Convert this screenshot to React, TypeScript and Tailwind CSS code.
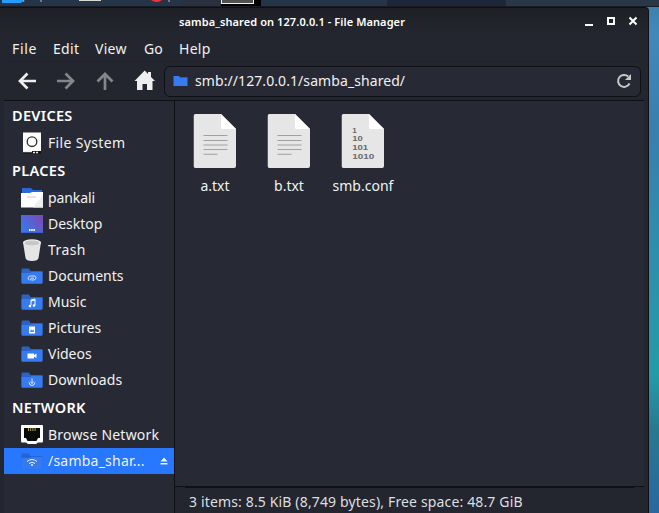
import type { ReactNode } from "react";

function Folder({ children, muted = false }: { children?: ReactNode; muted?: boolean }) {
  return (
    <svg width="22" height="20" viewBox="0 0 22 20" className="block">
      <path d="M.5 3.500V16h21V5H9.500L8 2.500H1.500Z" fill={muted ? "#2864cf" : "#2b62c4"} />
      <path d="M.5 7H9l1.500-1h11v11q0 .8-.8.8H1.300q-.8 0-.8-.8Z" fill={muted ? "#367bee" : "#367bf0"} />
      {children}
    </svg>
  );
}

function Row({ icon, label, track = "", active = false }: { icon: ReactNode; label: string; track?: string; active?: boolean }) {
  return (
    <div className={`flex h-[26px] shrink-0 items-center pl-[17px] pr-[6px] ${active ? "bg-[#2777ff]" : ""}`}>
      <span className="w-[22px] shrink-0">{icon}</span>
      <span className={`ml-[5px] whitespace-nowrap leading-[26px] ${track}`}>{label}</span>
      {active && (
        <svg width="8" height="8" viewBox="0 0 8 8" className="ml-auto" fill="#eef2fb">
          <path d="M4 .5 7.500 4.500H.5ZM.5 6h7v1.500h-7Z" />
        </svg>
      )}
    </div>
  );
}

function Heading({ children }: { children: ReactNode }) {
  return <div className="h-[29px] shrink-0 pl-2 text-[14.5px] font-semibold leading-[29px] tracking-[.3px] text-white">{children}</div>;
}

function FileIcon({ binary = false }: { binary?: boolean }) {
  return (
    <svg width="43" height="54" viewBox="0 0 43 54" className="block -translate-x-[.5px]">
      <path d="M2 0H27.500L42.500 15V52q0 2-2 2H2q-2 0-2-2V2Q0 0 2 0Z" fill="#e6e6e6" />
      <path d="M27.500 0 42.500 15H29q-1.500 0-1.500-1.500Z" fill="#fff" />
      {binary ? (
        <g fill="#686868" fontFamily="Liberation Sans" fontWeight="bold" fontSize="8">
          <text x="10.7" y="18.5">1</text>
          <text x="10.7" y="27.2" textLength="10.5" lengthAdjust="spacingAndGlyphs">10</text>
          <text x="10.7" y="35.9" textLength="16" lengthAdjust="spacingAndGlyphs">101</text>
          <text x="10.7" y="44.6" textLength="22" lengthAdjust="spacingAndGlyphs">1010</text>
        </g>
      ) : (
        <path d="M10 21.500H34M10 26.500H34M10 31H34M10 35.500H34M10 40.300H24" stroke="#a0a0a0" strokeWidth="1.1" />
      )}
    </svg>
  );
}

function FileItem({ name, binary = false }: { name: string; binary?: boolean }) {
  return (
    <div className="flex w-[74px] flex-col items-center">
      <FileIcon binary={binary} />
      <span className="mt-[6px] leading-6">{name}</span>
    </div>
  );
}

function TopPanel() {
  return (
    <svg width="659" height="7" viewBox="0 0 659 7" className="block shrink-0">
      <rect width="659" height="7" fill="#263448" />
      <rect x="181" width="41" height="7" fill="#2c3140" />
      <rect x="387" width="119" height="7" fill="#1d2739" />
      <rect x="506" width="153" height="7" fill="#293746" />
      <path d="M2 0H24L21 3H2Z" fill="#259cff" />
      <path d="M23.500 0V2M41 0V2M169 0V2" stroke="#8b929d" strokeWidth="1.5" />
      <rect x="79" width="22" height="1" fill="#d8d8d4" />
      <path d="M151 0H162Q157 4 151 0Z" fill="#fa3038" />
      <rect x="221" width="40" height="6" fill="#000" />
      <path d="M221 0H254V4H221Z" fill="#f1f1f1" />
      <path d="M222 0H253V3H222Z" fill="#51504f" />
      <rect y="6" width="659" height="1" fill="#171b23" />
    </svg>
  );
}

export default function App() {
  return (
    <div className="flex h-[513px] w-[659px] flex-col overflow-hidden bg-[linear-gradient(180deg,#3c7fa8_0%,#4089b8_6%,#387fae_25%,#308cac_45%,#259ba8_73%,#28788f_84%,#2a679f_100%)] font-['Noto_Sans',sans-serif] text-[14px] text-[#f1f1f1]">
      <TopPanel />
      <div className="flex h-[506px] w-[649px] flex-col rounded-tr-[4px] border-r border-t border-[#0e1015] bg-[linear-gradient(180deg,#1e2026_0px,#23262e_25px)] pl-1 pr-1">
        <header className="flex h-[28px] shrink-0 items-center">
          <h1 className="ml-[175px] whitespace-nowrap text-[11px] font-semibold leading-7 tracking-[.09px] text-white">samba_shared on 127.0.0.1 - File Manager</h1>
          <svg width="54" height="10" viewBox="0 0 54 10" className="ml-auto mr-[6px] -translate-y-px" fill="none" stroke="#fff" shapeRendering="crispEdges">
            <path d="M1 9H9" strokeWidth="2" />
            <path d="M24 2H30V8H24Z" strokeWidth="2" />
            <path d="M45.500 1.500 52.500 8.500M52.500 1.500 45.500 8.500" strokeWidth="2" shapeRendering="auto" />
          </svg>
        </header>
        <nav className="flex h-[25px] shrink-0 items-center pl-2 leading-6 tracking-[.3px]">
          <span className="w-[41px] tracking-[.7px]">File</span>
          <span className="w-[42px]">Edit</span>
          <span className="w-[49px]">View</span>
          <span className="w-[35px] tracking-normal">Go</span>
          <span>Help</span>
        </nav>
        <div className="flex h-[40px] shrink-0 items-center border-b border-t border-b-[#0e1015] border-t-[#20232a]">
          <svg width="160" height="38" viewBox="4 62 160 38" className="shrink-0" fill="none" strokeWidth="2.7">
            <path d="M36 81H20M27.500 73.500 20 81l7.500 7.500" stroke="#eee" />
            <path d="M57 81H73M65.500 73.500 73 81l-7.500 7.500" stroke="#85868a" />
            <path d="M105 90V74M97.500 81.500 105 74l7.500 7.500" stroke="#85868a" />
            <path d="M144.700 70.500 134.500 81H137V90H142.500V84H147V90H152.500V81H155L151 77V72H148V74Z" fill="#eee" />
          </svg>
          <div className="flex h-[31px] w-[477px] items-center rounded-[6px] border border-[#0e1015] bg-[#272a34] pl-2 pr-[8px]">
            <svg width="15" height="12" viewBox="0 0 15 12">
              <path d="M.5 1H6L7.500 3H14.500V11H.5Z" fill="#367bf0" />
              <path d="M6 1 7.500 3H14.500V2H7.500Z" fill="#2a60bd" />
            </svg>
            <span className="ml-[7px] leading-6 tracking-[.08px]">smb://127.0.0.1/samba_shared/</span>
            <svg width="16" height="16" viewBox="0 0 16 16" className="ml-auto">
              <path d="M13.500 10.500A6 6 0 1 1 12.200 3.500" fill="none" stroke="#c9c9c9" strokeWidth="2" />
              <path d="M15 1V7H9Z" fill="#c9c9c9" />
            </svg>
          </div>
        </div>
        <main className="flex min-h-0 w-[640px] flex-1">
          <aside className="flex w-[171px] shrink-0 flex-col border-r border-[#0e1015] bg-[#272a34]">
            <Heading>DEVICES</Heading>
            <Row label="File System" track="tracking-[.35px]" icon={<svg width="22" height="22" viewBox="0 0 22 22"><path d="M2 .5H20V20H2Z" fill="#fff" /><circle cx="11" cy="9.700" r="4.800" fill="none" stroke="#30333b" strokeWidth="1.4" /><path d="M2 19H20V21.500H2Z" fill="#111" /><path d="M2 19.500H11M12 20.500H14M15 20.500H17" stroke="#eee" strokeWidth="1.5" /></svg>} />
            <Heading>PLACES</Heading>
            <Row label="pankali" track="-tracking-[.1px]" icon={<svg width="22" height="22" viewBox="0 0 22 22"><path d="M1 1H10L12 3H21V10H1Z" fill="#2868d8" /><path d="M0 6H9L11 5H22V20.500H0Z" fill="#fff" /><path d="M22 8V20.500H12Z" fill="#ededed" /><path d="M6 10H15" stroke="#c8c8c8" /></svg>} />
            <Row label="Desktop" icon={<svg width="22" height="18" viewBox="0 0 22 18"><defs><linearGradient id="desktop" x1="0" y1=".8" x2="1" y2=".2"><stop stopColor="#347bf0" /><stop offset="1" stopColor="#794bb6" /></linearGradient></defs><path d="M0 0H22V18H0Z" fill="url(#desktop)" /><path d="M0 17.500H22" stroke="#395dd0" /><path d="M8 15H14" stroke="#fff" strokeWidth="2" strokeDasharray="1.5 .7" /></svg>} />
            <Row label="Trash" track="tracking-[.4px]" icon={<svg width="22" height="22" viewBox="0 0 22 22"><path d="M2 3 4.500 19Q5 22 11 22T17.500 19L20 3Z" fill="#e5e5e5" /><ellipse cx="11" cy="3.500" rx="9" ry="3.300" fill="#eee" /><ellipse cx="11" cy="4" rx="7.500" ry="2.500" fill="#c7c7c7" /></svg>} />
            <Row label="Documents" icon={<Folder><path d="M8.500 14q-1.800-.5-1.300-2.200.5-1.800 2.300-1.800h3.500q2.200 0 2 1.800-.3 2.200-2.500 2.200h-2q-1.300 0-1-1 .2-.8 1-.8h2.500" fill="none" stroke="#d5e4ff" /></Folder>} />
            <Row label="Music" icon={<Folder><path d="M10 13V8l4-1v6M10 9l4-1" fill="none" stroke="#fff" /><circle cx="9" cy="14" r="1.300" fill="#fff" /><circle cx="13" cy="13.500" r="1.300" fill="#fff" /></Folder>} />
            <Row label="Pictures" track="tracking-[.1px]" icon={<Folder><path d="M8 8.500H14V15.500H8Z" fill="#fff" /><path d="M9 13 10.500 11.500 12 12.500 13 11.500V14H9Z" fill="#5e8edb" /></Folder>} />
            <Row label="Videos" icon={<Folder><path d="M6.500 9.500H13V11L15.500 9.500V14L13 12.500V14.500H6.500Z" fill="#fff" /></Folder>} />
            <Row label="Downloads" track="tracking-[.1px]" icon={<Folder><path d="M11 8.500V13.500M9 11.500 11 13.500l2-2M8 12.500q.3 2.800 3 3 2.700-.2 3-3" fill="none" stroke="#dce9ff" /></Folder>} />
            <Heading>NETWORK</Heading>
            <Row label="Browse Network" track="tracking-[.2px]" icon={<svg width="22" height="20" viewBox="0 0 22 20"><path d="M1 0H21Q22 0 22 1V16Q22 17.500 21 17.500H17L15 19H7L5 17.500H1Q0 17.500 0 16V1Q0 0 1 0Z" fill="#fff" /><path d="M3 3H19V13H17L15.500 16H6.500L5 13H3Z" fill="#080909" /><path d="M7 4.500H15" stroke="#aaa14d" strokeWidth="3" strokeDasharray="1 1.200" /></svg>} />
            <Row active label="/samba_shar..." track="tracking-[.22px]" icon={<Folder muted><g fill="none" stroke="#eef4ff"><path d="M6 10.500q5-4 10 0M8 12.500q3-2.500 6 0" /><circle cx="11" cy="14" r=".6" fill="#fff" /></g></Folder>} />
          </aside>
          <section className="flex flex-1 flex-col">
            <div className="flex h-[385px] shrink-0 bg-[#272a34] pl-[3px] pt-[13px]">
              <FileItem name="a.txt" />
              <FileItem name="b.txt" />
              <FileItem name="smb.conf" binary />
            </div>
            <footer className="h-[27px] border-t border-[#0e1015] text-[#dedfe1]">
              <div className="mx-[10px] whitespace-nowrap border-t border-[#0e1015] pl-1 leading-[28px] tracking-[.15px]">3 items: 8.5 KiB (8,749 bytes), Free space: 48.7 GiB</div>
            </footer>
          </section>
        </main>
      </div>
    </div>
  );
}
